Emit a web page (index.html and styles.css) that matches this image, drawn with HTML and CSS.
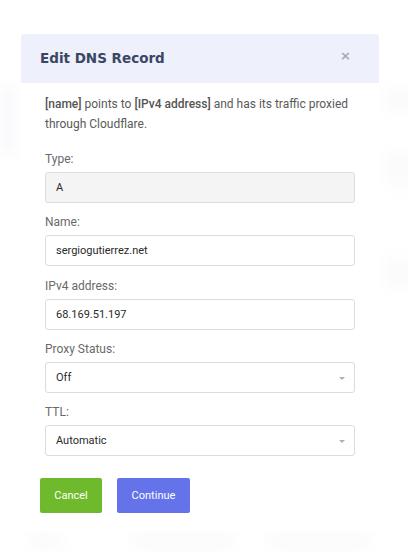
FILE: index.html
```html
<!DOCTYPE html>
<html lang="en">
<head>
<meta charset="utf-8">
<title>Edit DNS Record</title>
<link rel="stylesheet" href="styles.css">
</head>
<body>
<div class="backdrop" aria-hidden="true">
  <span class="blob b1"></span>
  <span class="blob b2"></span>
  <span class="blob b3"></span>
  <span class="blob b4"></span>
  <span class="blob b5"></span>
  <span class="blob b6"></span>
  <span class="blob b7"></span>
</div>
<div class="page">
  <div class="modal">
    <div class="modal-header">
      <h1 class="modal-title">Edit DNS Record</h1>
      <span class="close">&times;</span>
    </div>
    <div class="modal-body">
      <p class="intro"><b>[name]</b> points to <b>[IPv4 address]</b> and has its traffic proxied through Cloudflare.</p>
      <div class="field">
        <label class="label">Type:</label>
        <div class="input disabled">A</div>
      </div>
      <div class="field">
        <label class="label">Name:</label>
        <div class="input">sergiogutierrez.net</div>
      </div>
      <div class="field">
        <label class="label">IPv4 address:</label>
        <div class="input">68.169.51.197</div>
      </div>
      <div class="field">
        <label class="label">Proxy Status:</label>
        <div class="input select">Off<span class="caret"></span></div>
      </div>
      <div class="field">
        <label class="label">TTL:</label>
        <div class="input select">Automatic<span class="caret"></span></div>
      </div>
    </div>
    <div class="modal-footer">
      <button class="btn btn-cancel">Cancel</button>
      <button class="btn btn-continue">Continue</button>
    </div>
  </div>
</div>
</body>
</html>
```

FILE: styles.css
```css
* { box-sizing: border-box; }
html, body { margin: 0; padding: 0; background: #fff; }
body {
  width: 408px;
  height: 553px;
  overflow: hidden;
  font-family: Roboto, "Liberation Sans", sans-serif;
  position: relative;
}
.backdrop { position: absolute; inset: 0; z-index: 0; }
.blob {
  position: absolute;
  background: #ececec;
  filter: blur(7px);
  opacity: 0.22;
  border-radius: 4px;
}
.b1 { left: 0; top: 85px; width: 16px; height: 70px; background: #e4e4f0; }
.b2 { left: 385px; top: 88px; width: 30px; height: 24px; }
.b3 { left: 385px; top: 152px; width: 30px; height: 36px; }
.b4 { left: 385px; top: 258px; width: 30px; height: 30px; }
.b5 { left: 30px; top: 532px; width: 34px; height: 18px; }
.b6 { left: 132px; top: 532px; width: 102px; height: 18px; }
.b7 { left: 268px; top: 532px; width: 102px; height: 18px; }

.page {
  position: relative;
  z-index: 1;
  padding: 34px 0 0 21px;
}
.modal {
  width: 358px;
  background: #fff;
  border-radius: 3px;
  padding-bottom: 18px;
}
.modal-header {
  height: 49px;
  background: #eef0fc;
  border-radius: 3px 3px 0 0;
  display: flex;
  align-items: center;
  justify-content: space-between;
  padding: 0 28px 0 19px;
}
.modal-title {
  margin: 0;
  font-family: "DejaVu Sans", Verdana, sans-serif;
  font-weight: bold;
  font-size: 13.5px;
  color: #3a4762;
  line-height: 18px;
  padding-bottom: 2px;
}
.close {
  font-family: "DejaVu Sans", sans-serif;
  font-weight: bold;
  font-size: 13px;
  color: #a8a8ad;
  line-height: 13px;
  margin-top: -6px;
}
.modal-body {
  padding: 11px 24px 0 24px;
}
.intro {
  margin: 0 0 18px 0;
  font-size: 12px;
  line-height: 20px;
  color: #5a5a5a;
}
.intro b { font-weight: 500; color: #555; }
.field {
  display: flex;
  flex-direction: column;
  gap: 5px;
  margin-bottom: 12.25px;
}
.label {
  font-size: 12px;
  line-height: 15px;
  color: #6a6a6a;
}
.input {
  height: 31px;
  border: 1px solid #dcdcdc;
  border-radius: 3px;
  background: #fff;
  font-size: 11px;
  color: #2a2a2a;
  display: flex;
  align-items: center;
  padding: 0 10px;
  position: relative;
}
.input.disabled { background: #f4f4f4; }
.caret {
  position: absolute;
  right: 9px;
  top: 14px;
  width: 0;
  height: 0;
  border-left: 3px solid transparent;
  border-right: 3px solid transparent;
  border-top: 3px solid #aeb0b8;
}
.modal-footer {
  display: flex;
  gap: 15px;
  padding: 10px 0 0 19px;
}
.btn {
  height: 35px;
  border: none;
  border-radius: 2px;
  color: #fff;
  font-family: Roboto, "Liberation Sans", sans-serif;
  font-size: 11px;
  padding: 0;
}
.btn-cancel { width: 62px; background: #6fba2c; }
.btn-continue { width: 73px; background: #6473ea; }
```
